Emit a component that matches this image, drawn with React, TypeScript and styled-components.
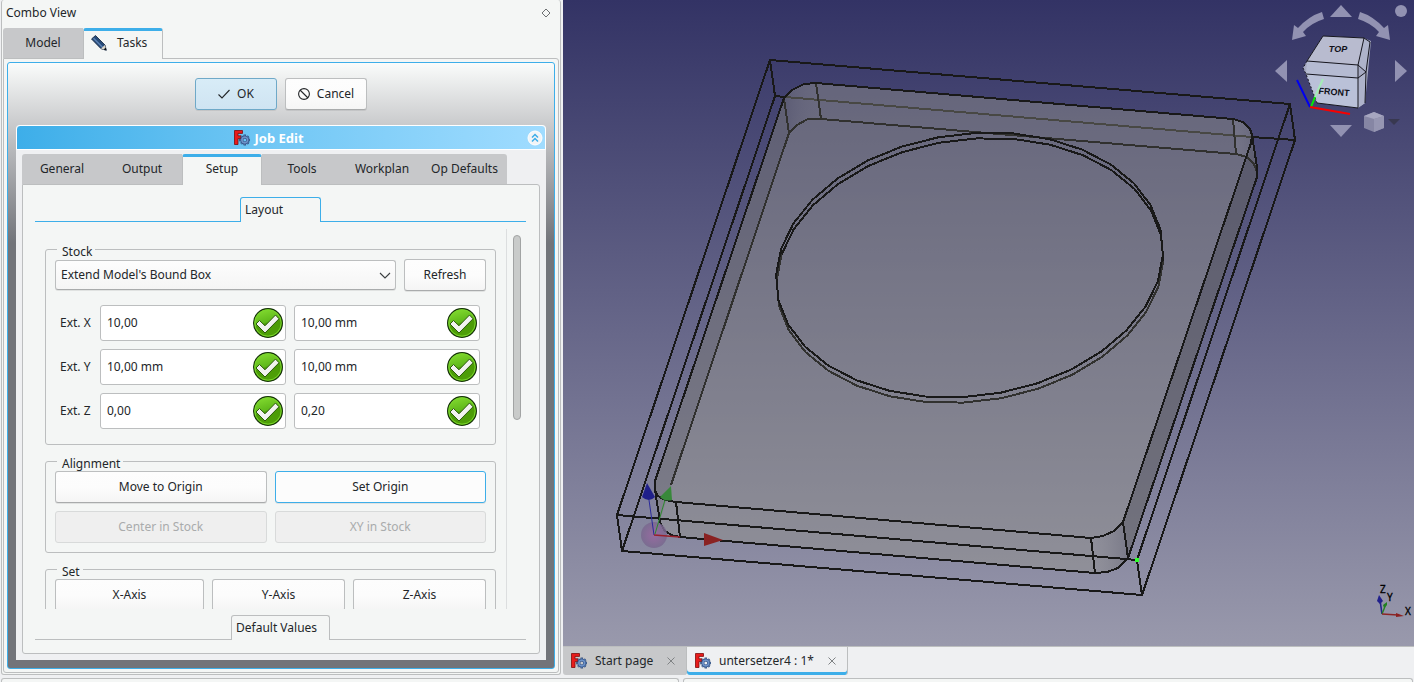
import React from "react";
import styled, { createGlobalStyle, css } from "styled-components";

const line = "#bcbebf";
const accent = "#3daee9";
const ink = "#232629";
const paper = "#f4f6f5";
const base = "#eff0f2";

const GlobalStyle = createGlobalStyle`
  * { box-sizing: border-box; }
  body {
    margin: 0;
    background: ${base};
    color: ${ink};
    font-family: "Noto Sans", "Open Sans", sans-serif;
    font-size: 12px;
    line-height: 18px;
  }
  button, input, select { font: inherit; color: inherit; margin: 0; }
`;

/* ---------- window ---------- */

const Window = styled.div`
  display: flex;
  flex-direction: column;
  gap: 3px;
  height: 100vh;
  overflow: hidden;
`;

const Workspace = styled.div`
  display: flex;
  flex: 1;
  min-height: 0;
  gap: 2px;
  padding-left: 1px;
`;

const LowerDocks = styled.div`
  display: grid;
  grid-template-columns: 678px 1fr;
  gap: 4px;
  height: 4px;
  padding: 0 1px;
`;

const LowerDock = styled.div`
  border: 1px solid ${line};
  border-bottom: 0;
  border-radius: 3px 3px 0 0;
  background: ${paper};
`;

/* ---------- combo view dock ---------- */

const Dock = styled.aside`
  display: flex;
  flex-direction: column;
  flex: 0 0 560px;
  min-width: 0;
  padding: 0 1px 1px;
  border: 1px solid ${line};
  border-top: 0;
  border-radius: 3px;
  background: ${paper};
`;

const DockTitle = styled.header`
  display: flex;
  align-items: center;
  justify-content: space-between;
  height: 28px;
  padding: 0 8px 2px 3px;
`;

const GhostButton = styled.button`
  display: flex;
  padding: 0;
  border: 0;
  background: none;
`;

const TabRow = styled.div`
  display: flex;
  position: relative;
  z-index: 1;
  height: 31px;
  margin-bottom: -1px;
`;

const Tab = styled.button<{ $active?: boolean; $width?: number; $icon?: boolean }>`
  display: flex;
  align-items: center;
  justify-content: ${(p) => (p.$icon ? "flex-start" : "center")};
  gap: 10px;
  width: ${(p) => p.$width ?? 80}px;
  height: 30px;
  padding: 0 0 0 ${(p) => (p.$icon ? 7 : 0)}px;
  border: 0;
  background: #c7c8ca;
  &:first-child { border-top-left-radius: 3px; }
  &:last-child { border-top-right-radius: 3px; }
  ${(p) =>
    p.$active &&
    css`
      height: 31px;
      padding-bottom: 4px;
      border: 1px solid ${line};
      border-top: 3px solid ${accent};
      border-bottom: 0;
      border-radius: 3px 3px 0 0;
      background: ${paper};
    `}
`;

const TabPane = styled.div`
  display: flex;
  flex: 1;
  flex-direction: column;
  min-height: 0;
  border: 1px solid ${line};
  border-radius: 0 3px 3px 3px;
  background: ${paper};
`;

const DockPane = styled(TabPane)`
  padding: 3px;
`;

const TaskPanel = styled.section`
  display: flex;
  flex: 1;
  flex-direction: column;
  min-height: 0;
  padding: 15px 8px 8px;
  border: 1px solid ${accent};
  border-radius: 3px;
  background: linear-gradient(#fafcfb 0, #c9cacc 62px, #72747a 180px, #72747a);
`;

const DialogButtons = styled.div`
  display: flex;
  justify-content: center;
  gap: 8px;
  height: 47px;
`;

const Button = styled.button<{ $tone?: "primary" | "focus" }>`
  display: flex;
  align-items: center;
  justify-content: center;
  gap: 7px;
  height: 32px;
  min-width: 82px;
  padding: 0 4px;
  border: 1px solid ${line};
  border-bottom-color: #a9abac;
  border-radius: 3px;
  background: linear-gradient(#fdfdfd, #fcfcfc 50%, #f5f5f5);
  box-shadow: 0 1px 0 rgba(0, 0, 0, 0.08);
  &:disabled {
    border-color: #d8dada;
    background: #efefef;
    box-shadow: none;
    color: #a9abac;
  }
  ${(p) =>
    p.$tone === "primary" &&
    css`
      border-color: #6fa9c8;
      background: linear-gradient(#d8ecf7, #cfe4f2);
    `}
  ${(p) =>
    p.$tone === "focus" &&
    css`
      border-color: ${accent};
      background: #fcfcfc;
    `}
`;

const TaskBox = styled.div`
  display: flex;
  flex: 1;
  flex-direction: column;
  min-height: 0;
  border-radius: 4px 4px 0 0;
  background: ${base};
`;

const TaskHeader = styled.header`
  display: flex;
  align-items: center;
  height: 25px;
  padding-right: 2px;
  border: 1px solid #fff;
  border-radius: 4px 4px 0 0;
  background: linear-gradient(90deg, ${accent}, #73c8f5 50%, #a0dcff);
`;

const TaskTitle = styled.h2`
  display: flex;
  flex: 1;
  align-items: center;
  justify-content: center;
  gap: 4px;
  margin: 0;
  padding-right: 6px;
  color: #fff;
  font-size: 13px;
  font-weight: 700;
`;

const TaskBody = styled.div`
  display: flex;
  flex: 1;
  flex-direction: column;
  min-height: 0;
  padding: 4px 6px 6px;
`;

const SetupPane = styled(TabPane)`
  padding: 12px 13px 13px 12px;
`;

/* ---------- tool box pages ---------- */

const PageHeader = styled.div<{ $color: string }>`
  display: flex;
  flex: 0 0 25px;
  &::before, &::after {
    content: "";
    flex: 1;
    border-bottom: 1px solid ${(p) => p.$color};
  }
`;

const PageTab = styled.button<{ $color: string; $width: number }>`
  width: ${(p) => p.$width}px;
  padding: 0 0 0 4px;
  border: 1px solid ${(p) => p.$color};
  border-bottom: 0;
  border-radius: 3px 3px 0 0;
  background: ${paper};
  text-align: left;
`;

const ScrollArea = styled.div`
  display: flex;
  flex: 1;
  min-height: 0;
  margin: 7px 0 6px;
`;

const ScrollContent = styled.form`
  display: flex;
  flex: 1;
  flex-direction: column;
  gap: 6px;
  min-width: 0;
  padding: 10px 10px 0;
  border-right: 1px solid #dcdedf;
  overflow: hidden;
`;

const ScrollTrack = styled.div`
  flex: 0 0 19px;
  padding: 6px 5px 0 6px;
`;

const ScrollThumb = styled.div`
  height: 185px;
  border: 1px solid #a2a4a4;
  border-radius: 4px;
  background: #c9cbca;
`;

const Group = styled.fieldset<{ $bottom: number }>`
  flex: none;
  min-width: 0;
  margin: 0;
  padding: 0 9px ${(p) => p.$bottom}px;
  border: 1px solid ${line};
  border-radius: 3px;
`;

const Legend = styled.legend`
  height: 20px;
  margin-left: 2px;
  padding: 6px 3px 0 5px;
  line-height: 14px;
`;

const StockRow = styled.div`
  display: flex;
  align-items: center;
  gap: 8px;
  margin-bottom: 14px;
`;

const SelectBox = styled.div`
  position: relative;
  display: flex;
  flex: 1;
`;

const Select = styled.select`
  width: 100%;
  height: 30px;
  padding: 0 28px 0 5px;
  border: 1px solid ${line};
  border-bottom-color: #a9abac;
  border-radius: 3px;
  background: linear-gradient(#fdfdfd, #f5f5f5);
  box-shadow: 0 1px 0 rgba(0, 0, 0, 0.08);
  appearance: none;
`;

const SelectArrow = styled.svg`
  position: absolute;
  top: 9px;
  right: 4px;
  pointer-events: none;
`;

const ExtentGrid = styled.div`
  display: grid;
  grid-template-columns: 32px minmax(0, 1fr) minmax(0, 1fr);
  align-items: center;
  gap: 8px;
  padding: 0 6px 0 5px;
`;

const FieldLabel = styled.label`
  white-space: nowrap;
`;

const Field = styled.div`
  display: flex;
  align-items: center;
  height: 36px;
  padding-right: 1px;
  border: 1px solid ${line};
  border-radius: 3px;
  background: #fff;
`;

const FieldInput = styled.input`
  flex: 1;
  min-width: 0;
  padding: 0 6px;
  border: 0;
  outline: 0;
  background: none;
`;

const ButtonGrid = styled.div<{ $columns: string }>`
  position: relative;
  display: grid;
  grid-template-columns: ${(p) => p.$columns};
  gap: 8px;
`;

/* ---------- document area ---------- */

const Documents = styled.main`
  display: flex;
  flex: 1;
  flex-direction: column;
  min-width: 0;
`;

const Viewport = styled.div`
  position: relative;
  flex: 1;
  min-height: 0;
  overflow: hidden;
  background: linear-gradient(#333365, #9999ac);
`;

const Scene = styled.svg`
  display: block;
  width: 100%;
  height: 100%;
`;

const NavigationCube = styled.svg`
  position: absolute;
  top: 0;
  right: 0;
`;

const AxisCross = styled.svg`
  position: absolute;
  right: 0;
  bottom: 0;
`;

const DocumentTabs = styled.nav`
  display: flex;
  height: 29px;
  border-top: 1px solid ${line};
`;

const DocumentTab = styled.div<{ $active?: boolean; $width: number }>`
  display: flex;
  align-items: center;
  gap: 8px;
  width: ${(p) => p.$width}px;
  padding: 0 11px 0 8px;
  border-right: 1px solid ${line};
  background: ${(p) => (p.$active ? base : "#c7c8ca")};
  box-shadow: ${(p) => (p.$active ? `inset 0 -3px 0 ${accent}` : "none")};
  border-radius: 0 0 3px 3px;
  a {
    color: inherit;
    text-decoration: none;
  }
  button { margin-left: auto; }
`;

/* ---------- icons ---------- */

const gearTeeth = [0, 45, 90, 135, 180, 225, 270, 315];

const AppIcon = () => (
  <svg width="16" height="16" viewBox="0 0 16 16" aria-hidden="true">
    <path d="M0.5 0.5 H8.5 V3.4 H4 V5.8 H7 V8.6 H4 V14.5 H0.5 Z" fill="#e81c1c" stroke="#7d0c0c" strokeWidth="0.8" />
    <g transform="translate(10.8 10)">
      {gearTeeth.map((a) => (
        <rect key={a} x="-1" y="-5.1" width="2" height="2.6" fill="#5f86c0" stroke="#1d3561" strokeWidth="0.5" transform={`rotate(${a})`} />
      ))}
      <circle r="2.9" fill="none" stroke="#27457a" strokeWidth="2.8" />
      <circle r="2.9" fill="none" stroke="#6d92c8" strokeWidth="1.8" />
    </g>
  </svg>
);

const PencilIcon = () => (
  <svg width="16" height="16" viewBox="0 0 16 16" aria-hidden="true">
    <path d="M0.5 4 L4.5 0.5 L14 10 L15.3 15.3 L10 13.7 Z" fill="#274a78" stroke="#10233f" strokeWidth="0.8" />
    <path d="M2.5 3.3 L11.5 12.2" stroke="#5d83b5" strokeWidth="1.4" />
    <path d="M10 13.5 L13.9 10 L14.6 12.6 L12.8 14.5 Z" fill="#dcd6c8" />
    <path d="M12.8 14.6 L14.8 12.8 L15.3 15.3 Z" fill="#111" />
  </svg>
);

const ValidIcon = () => (
  <svg width="32" height="32" viewBox="-16 -16 32 32" aria-hidden="true">
    <defs>
      <linearGradient id="valid" x1="0" y1="0" x2="0.3" y2="1">
        <stop offset="0" stopColor="#8ae234" />
        <stop offset="0.55" stopColor="#5fb81a" />
        <stop offset="0.6" stopColor="#4a9a06" />
        <stop offset="1" stopColor="#4e9f08" />
      </linearGradient>
    </defs>
    <circle r="14.4" fill="url(#valid)" stroke="#16330a" strokeWidth="1.2" />
    <circle r="13.2" fill="none" stroke="#7ad62c" strokeWidth="1" />
    <path d="M-12 1 L-8.5 -2.5 L-3 2.8 L7.5 -8 L11 -4.2 L-3 10 Z" fill="#f2f3f0" stroke="#2c5a0c" strokeWidth="1" />
  </svg>
);

const CloseIcon = () => (
  <svg width="8" height="8" viewBox="0 0 8 8" aria-hidden="true">
    <path d="M0.5 0.5 L7.5 7.5 M7.5 0.5 L0.5 7.5" stroke="#7f8284" />
  </svg>
);

/* ---------- 3D scene ---------- */

const RIM_STEPS = 32;

const rimPoints = (cx: number, cy: number, from: number, to: number) =>
  Array.from({ length: to - from + 1 }, (_, i) => {
    const angle = ((from + i) * 2 * Math.PI) / RIM_STEPS;
    const c = Math.cos(angle);
    const s = Math.sin(angle);
    return `${(cx + 188.4 * c - 44.2 * s).toFixed(1)},${(cy + 16.1 * c + 131.5 * s).toFixed(1)}`;
  }).join(" ");

const plateTop =
  "M816 83 L1233 119 L1243 122 L1250 129 L1252 135 L1251 143 L1123 522 L1114 531 L1103 536 L1091 538 L676 502 L665 500 L658 496 L655 490 L655 481 L784 98 L792 90 L804 84 Z";

const plateOutline =
  "M816 83 L1233 119 L1243 122 L1250 129 L1252 135 L1257 167 L1257 177 L1128 558 L1118 568 L1107 572 L1095 573 L680 537 L671 535 L664 530 L660 522 L655 490 L655 481 L784 98 L792 90 L804 84 Z";

const ModelScene = () => (
  <Scene viewBox="563 0 851 646" preserveAspectRatio="xMidYMid slice" role="img" aria-label="Model view">
    <defs>
      <linearGradient id="cornerBack" x1="0" x2="1">
        <stop offset="0" stopColor="#50506c" stopOpacity="0.5" />
        <stop offset="1" stopColor="#77778c" stopOpacity="0.1" />
      </linearGradient>
      <linearGradient id="cornerFront" x1="0" x2="1">
        <stop offset="0" stopColor="#9a9aa8" stopOpacity="0.2" />
        <stop offset="1" stopColor="#5c5c70" stopOpacity="0.4" />
      </linearGradient>
      <radialGradient id="originBall">
        <stop offset="0" stopColor="#9966a0" />
        <stop offset="1" stopColor="#78688e" />
      </radialGradient>
    </defs>

    <path d={plateOutline} fill="#92918c" fillOpacity="0.46" />
    <path d="M784 98 L789 133 L671 485 L660 520 L655 490 L655 481 Z" fill="#3c3c4c" fillOpacity="0.18" />
    <path d="M1252 143 L1257 177 L1128 558 L1123 522 Z" fill="#30303c" fillOpacity="0.28" />
    <path d="M784 98 L792 90 L804 84 L816 83 L821 119 L808 119 L797 125 L789 133 Z" fill="url(#cornerBack)" />
    <path d="M1233 119 L1243 122 L1250 129 L1252 135 L1257 167 L1247 157 L1236 154 Z" fill="url(#cornerFront)" />
    <path d="M655 481 L655 490 L658 496 L676 502 L680 537 L664 530 L660 522 Z" fill="#9a9aaa" fillOpacity="0.2" />
    <path d="M1091 538 L1103 536 L1114 531 L1123 522 L1128 558 L1118 568 L1107 572 L1095 573 Z" fill="url(#cornerFront)" />

    <g fill="none" stroke="#484844" strokeWidth="2" shapeRendering="crispEdges">
      <path d="M785 97 L1252 137" />
      <g stroke="#31312f">
        <path d="M671 485 L789 133 L797 125 L808 119 L821 119 L1236 154 L1247 157 L1254 164 L1257 172" />
        <path d="M784 98 L789 133 M816 83 L821 119 M1233 119 L1236 154" />
        <polyline points={rimPoints(970, 270.5, -2, 17)} />
      </g>
    </g>

    <g fill="none" stroke="#191919" strokeWidth="2" shapeRendering="crispEdges">
      <path d="M785 97 L775 96 L622 551 L1142 595 L1295 140 L1252 137" />
      <path d="M770 60 L1290 104 L1137 560 L617 515 Z" />
      <path d="M770 60 L775 96 M1290 104 L1295 140 M617 515 L622 551 M1137 560 L1142 595" />
      <path d={plateTop} />
      <path d="M1252 135 L1257 167 L1257 177 L1128 558 L1118 568 L1107 572 L1095 573 L680 537 L671 535 L664 530 L660 522 L655 490" />
      <path d="M676 502 L680 537 M1091 538 L1095 573 M1123 522 L1128 558" />
      <polyline points={rimPoints(969.5, 265, 0, RIM_STEPS)} />
      <polyline points={rimPoints(970, 270.5, 16, 31)} />
    </g>

    <circle cx="654" cy="535" r="13" fill="url(#originBall)" fillOpacity="0.85" />
    <path d="M654 535 L649 500" stroke="#2a2a9a" />
    <path d="M655 534 L665 500" stroke="#2d8a2d" />
    <path d="M654 535 L680 537" stroke="#99202a" strokeWidth="1.4" />
    <path d="M647 483 L655 497 Q649 503 642 497 Z" fill="#20208a" />
    <path d="M671 486 L672 500 Q665 502 660 497 Z" fill="#38883a" />
    <path d="M704 533 L723 540 L704 546 Z" fill="#8a2222" />
    <rect x="1135" y="558" width="4" height="4" fill="#30ff30" />
  </Scene>
);

const RotateArrow = () => (
  <path d="M1322 12 Q1309 16 1298 28 L1294 25 L1292 40 L1306 36 L1303 32 Q1311 23 1324 19 Z" />
);

const NavCube = () => (
  <NavigationCube width="160" height="150" viewBox="1254 0 160 150" role="img" aria-label="Navigation cube">
    <g fill="#9292b2">
      <circle cx="1401" cy="11" r="6" />
      <path d="M1341 5 L1352 17 H1330 Z" />
      <path d="M1341 137 L1352 125 H1330 Z" />
      <path d="M1275 71 L1287 60 V82 Z" />
      <path d="M1407 71 L1395 60 V82 Z" />
      <RotateArrow />
      <g transform="translate(2682 0) scale(-1 1)">
        <RotateArrow />
      </g>
    </g>

    <path d="M1307 61 L1303 68 L1306 74 L1317 103 L1358 108 L1365 103 L1371 41 L1364 38 L1323 36 Z" fill="#a6aac2" />
    <path d="M1323 36 L1364 38 L1358 65 L1307 61 Z" fill="#b8bbcf" />
    <path d="M1307 61 L1358 65 L1358 78 L1306 74 Z" fill="#b5bbd2" />
    <path d="M1306 74 L1358 78 V108 L1317 103 Z" fill="#bac1d8" />
    <path d="M1364 38 L1370 42 L1366 72 L1358 65 Z M1358 78 L1366 72 L1365 103 L1358 108 Z" fill="#aeb3ca" />
    <g fill="none" stroke="#16161e" strokeWidth="1">
      <path d="M1323 36 L1364 38 L1358 65 L1307 61 Z M1306 74 L1358 78 V108 L1317 103" />
      <path d="M1358 65 L1366 72 L1358 78 M1358 65 V78 M1364 38 L1370 42 L1366 72 L1365 103" />
      <path d="M1307 61 L1303 68 L1306 74 L1317 103" strokeDasharray="2 2" />
    </g>
    <g fill="#101018" fontFamily="Liberation Sans, sans-serif" fontSize="9" fontWeight="700" textAnchor="middle">
      <text x="1338" y="52" fontStyle="italic">TOP</text>
      <text x="1334" y="95" transform="rotate(5 1334 92)">FRONT</text>
    </g>

    <g fill="none" strokeWidth="2">
      <path d="M1297 80 L1310 107" stroke="#0000f0" />
      <path d="M1315 97 L1323 79" stroke="#a4ecb8" />
      <path d="M1311 107 L1315 97" stroke="#00f000" />
      <path d="M1310 107 L1350 114" stroke="#f80000" />
    </g>

    <path d="M1374 112 L1384 116 V128 L1374 132 L1364 128 V116 Z" fill="#8686a4" />
    <path d="M1374 112 L1384 116 L1374 119 L1364 116 Z" fill="#a6a6c0" />
    <path d="M1374 119 L1384 116 V128 L1374 132 Z" fill="#9696b2" />
    <path d="M1388 119 H1400 L1394 125 Z" fill="#383850" />
  </NavigationCube>
);

const AxisLabels = () => (
  <AxisCross width="50" height="70" viewBox="1364 576 50 70" role="img" aria-label="Axis cross">
    <path d="M1382 614 L1380 600" stroke="#24248c" strokeWidth="1.6" />
    <path d="M1382 614 L1386 604" stroke="#248024" strokeWidth="1.4" />
    <path d="M1382 614 L1398 615" stroke="#8c2424" strokeWidth="1.4" />
    <path d="M1379 595 L1383 601 L1380 604 L1377 601 Z" fill="#20208c" />
    <path d="M1387 602 L1387 605 L1384 608 L1383 605 Z" fill="#208020" />
    <path d="M1396 613 L1404 616 L1396 617 Z" fill="#8c2020" />
    <g fontFamily="Noto Sans, sans-serif" fontSize="10" fill="#000" stroke="#000" strokeWidth="0.3">
      <text x="1380" y="593">Z</text>
      <text x="1387" y="601">Y</text>
      <text x="1405" y="615">X</text>
    </g>
  </AxisCross>
);

/* ---------- page ---------- */

const extents = [
  { axis: "X", low: "10,00", high: "10,00 mm" },
  { axis: "Y", low: "10,00 mm", high: "10,00 mm" },
  { axis: "Z", low: "0,00", high: "0,20" },
];

const jobTabs = ["General", "Output", "Setup", "Tools", "Workplan", "Op Defaults"];

const StockGroup = () => (
  <Group $bottom={15}>
    <Legend>Stock</Legend>
    <StockRow>
      <SelectBox>
        <Select aria-label="Stock type" defaultValue="extend">
          <option value="extend">Extend Model's Bound Box</option>
        </Select>
        <SelectArrow width="14" height="12" viewBox="0 0 14 12" aria-hidden="true">
          <path d="M2 4 L7 9 L12 4" fill="none" stroke="#3b3e40" strokeWidth="1.1" />
        </SelectArrow>
      </SelectBox>
      <Button type="button">Refresh</Button>
    </StockRow>
    <ExtentGrid>
      {extents.map(({ axis, low, high }) => (
        <React.Fragment key={axis}>
          <FieldLabel htmlFor={`low-${axis}`}>Ext. {axis}</FieldLabel>
          <Field>
            <FieldInput id={`low-${axis}`} defaultValue={low} />
            <ValidIcon />
          </Field>
          <Field>
            <FieldInput aria-label={`Ext. ${axis} positive`} defaultValue={high} />
            <ValidIcon />
          </Field>
        </React.Fragment>
      ))}
    </ExtentGrid>
  </Group>
);

const ComboView = () => (
  <Dock>
    <DockTitle>
      <span>Combo View</span>
      <GhostButton type="button" aria-label="Float panel">
        <svg width="10" height="10" viewBox="0 0 10 10" aria-hidden="true">
          <path d="M5 1 L9 5 L5 9 L1 5 Z" fill="none" stroke="#6d7072" />
        </svg>
      </GhostButton>
    </DockTitle>
    <TabRow>
      <Tab type="button">Model</Tab>
      <Tab type="button" $active $icon>
        <PencilIcon />
        Tasks
      </Tab>
    </TabRow>
    <DockPane>
      <TaskPanel>
        <DialogButtons>
          <Button type="button" $tone="primary">
            <svg width="12" height="10" viewBox="0 0 12 10" aria-hidden="true">
              <path d="M0.5 5.5 L4 9 L11.5 1" fill="none" stroke={ink} strokeWidth="1.1" />
            </svg>
            OK
          </Button>
          <Button type="button">
            <svg width="12" height="12" viewBox="0 0 12 12" aria-hidden="true">
              <path d="M2 2 L10 10" stroke={ink} strokeWidth="1.1" />
              <circle cx="6" cy="6" r="5.4" fill="none" stroke={ink} strokeWidth="1.1" />
            </svg>
            Cancel
          </Button>
        </DialogButtons>
        <TaskBox>
          <TaskHeader>
            <TaskTitle>
              <AppIcon />
              Job Edit
            </TaskTitle>
            <GhostButton type="button" aria-label="Collapse">
              <svg width="16" height="16" viewBox="0 0 16 16" aria-hidden="true">
                <circle cx="8" cy="8" r="7" fill="#f2f4f6" stroke="#fff" />
                <path d="M5 7.5 L8 4.5 L11 7.5 M5 11.5 L8 8.5 L11 11.5" fill="none" stroke={accent} strokeWidth="1.5" />
              </svg>
            </GhostButton>
          </TaskHeader>
          <TaskBody>
            <TabRow>
              {jobTabs.map((name) => (
                <Tab key={name} type="button" $active={name === "Setup"} $width={name === "Op Defaults" ? 85 : 80}>
                  {name}
                </Tab>
              ))}
            </TabRow>
            <SetupPane>
              <PageHeader $color={accent}>
                <PageTab type="button" $color={accent} $width={81}>
                  Layout
                </PageTab>
              </PageHeader>
              <ScrollArea>
                <ScrollContent>
                  <StockGroup />
                  <Group $bottom={9}>
                    <Legend>Alignment</Legend>
                    <ButtonGrid $columns="1fr 1fr">
                      <Button type="button">Move to Origin</Button>
                      <Button type="button" $tone="focus">Set Origin</Button>
                      <Button type="button" disabled>Center in Stock</Button>
                      <Button type="button" disabled>XY in Stock</Button>
                    </ButtonGrid>
                  </Group>
                  <Group $bottom={9}>
                    <Legend>Set</Legend>
                    <ButtonGrid $columns="149px 1fr 1fr">
                      <Button type="button">X-Axis</Button>
                      <Button type="button">Y-Axis</Button>
                      <Button type="button">Z-Axis</Button>
                    </ButtonGrid>
                  </Group>
                </ScrollContent>
                <ScrollTrack>
                  <ScrollThumb />
                </ScrollTrack>
              </ScrollArea>
              <PageHeader $color={line}>
                <PageTab type="button" $color={line} $width={99}>
                  Default Values
                </PageTab>
              </PageHeader>
            </SetupPane>
          </TaskBody>
        </TaskBox>
      </TaskPanel>
    </DockPane>
  </Dock>
);

const App = () => (
  <>
    <GlobalStyle />
    <Window>
      <Workspace>
        <ComboView />
        <Documents>
          <Viewport>
            <ModelScene />
            <NavCube />
            <AxisLabels />
          </Viewport>
          <DocumentTabs>
            <DocumentTab $width={124}>
              <AppIcon />
              <a href="#start">Start page</a>
              <GhostButton type="button" aria-label="Close Start page">
                <CloseIcon />
              </GhostButton>
            </DocumentTab>
            <DocumentTab $active $width={161}>
              <AppIcon />
              <a href="#untersetzer4">untersetzer4 : 1*</a>
              <GhostButton type="button" aria-label="Close untersetzer4">
                <CloseIcon />
              </GhostButton>
            </DocumentTab>
          </DocumentTabs>
        </Documents>
      </Workspace>
      <LowerDocks>
        <LowerDock />
        <LowerDock />
      </LowerDocks>
    </Window>
  </>
);

export default App;
